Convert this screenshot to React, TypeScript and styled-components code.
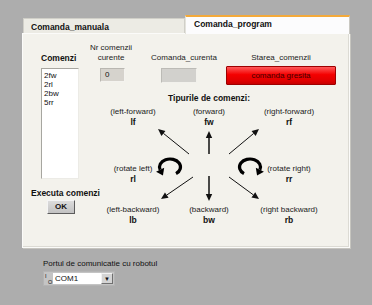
import React, { FC } from "react"
import styled, { createGlobalStyle } from "styled-components"

const GlobalStyle = createGlobalStyle`
    html, body {
        margin: 0;
        padding: 0;
        background: #adadad;
    }
    body {
        width: 372px;
        height: 305px;
        overflow: hidden;
        font-family: "Liberation Sans", Arial, sans-serif;
        color: #111;
    }
`

const Page = styled.div`
    padding: 15px 0 0 22px;
`

const TabStrip = styled.div`
    display: flex;
    align-items: flex-end;
    width: 328px;
    height: 18px;
`

const Tab = styled.div<{ $active?: boolean }>`
    box-sizing: border-box;
    font-size: 8.5px;
    font-weight: bold;
    white-space: nowrap;
    ${(p) =>
        p.$active
            ? `
        position: relative;
        z-index: 1;
        width: 165px;
        height: 19px;
        margin-bottom: -1px;
        padding: 2px 0 0 8px;
        background: #fcfcfd;
        border-top: 2px solid #f3a93a;
        border-left: 1px solid #e4e3dc;
        border-right: 1px solid #c9c8c2;
    `
            : `
        width: 162px;
        height: 15px;
        margin-left: 1px;
        padding: 3px 0 0 7px;
        background: #ecebe4;
        border: 1px solid #d0cfc8;
        border-bottom: none;
    `}
`

const Panel = styled.div`
    box-sizing: border-box;
    display: flex;
    width: 328px;
    height: 215px;
    padding: 9px 0 0 8px;
    background: #f3f2ec;
    border: 1px solid #fbfbf9;
    box-shadow: 1px 1px 0 #c6c5bf, inset -1px -1px 0 #dcdbd4;
`

const LeftColumn = styled.div`
    display: flex;
    flex-direction: column;
    align-items: flex-start;
    width: 60px;
    flex: none;
`

const BoldLabel = styled.div<{ $indent?: number; $top?: number }>`
    margin: ${(p) => p.$top ?? 0}px 0 0 ${(p) => p.$indent ?? 0}px;
    font-size: 8.5px;
    font-weight: bold;
    line-height: 9px;
    white-space: nowrap;
`

const ListBox = styled.div`
    box-sizing: border-box;
    width: 38px;
    height: 111px;
    margin: 5px 0 0 10px;
    padding: 2px 0 0 2px;
    background: #fff;
    border: 1px solid;
    border-color: #a7a6a0 #ecebe6 #ecebe6 #a7a6a0;
    font-size: 8px;
    line-height: 9px;
`

const OkButton = styled.div`
    box-sizing: border-box;
    width: 28px;
    height: 14px;
    margin: 2px 0 0 16px;
    background: linear-gradient(#dcdcdc, #c2c2c2);
    border: 1px solid;
    border-color: #f4f4f4 #5c5c5c #5c5c5c #f4f4f4;
    font-size: 8px;
    font-weight: bold;
    line-height: 12px;
    text-align: center;
`

const RightArea = styled.div`
    display: flex;
    flex-direction: column;
`

const TopRow = styled.div`
    display: flex;
`

const Field = styled.div<{ $width: number; $gap: number }>`
    display: flex;
    flex-direction: column;
    align-items: center;
    width: ${(p) => p.$width}px;
    margin-left: ${(p) => p.$gap}px;
`

const FieldLabel = styled.div`
    display: flex;
    align-items: flex-end;
    justify-content: center;
    height: 20px;
    font-size: 8px;
    line-height: 10px;
    text-align: center;
    white-space: nowrap;
    color: #222;
`

const FieldBody = styled.div`
    display: flex;
    align-items: center;
    justify-content: center;
    height: 24px;
`

const NumBox = styled.div`
    box-sizing: border-box;
    width: 25px;
    height: 14px;
    margin-left: 3px;
    padding-left: 4px;
    background: #d6d3cd;
    border: 1px solid;
    border-color: #b9b7b1 #f4f3ef #f4f3ef #b9b7b1;
    font-size: 8px;
    line-height: 12px;
`

const StringBox = styled.div`
    box-sizing: border-box;
    width: 36px;
    height: 15px;
    margin-left: -10px;
    background: #d2d1cd;
    border: 1px solid;
    border-color: #bcbbb6 #f2f1ec #f2f1ec #bcbbb6;
`

const StatusButton = styled.div`
    box-sizing: border-box;
    width: 110px;
    height: 19px;
    background: linear-gradient(#ff5a5a, #f40000 45%, #e00000 80%, #c80000);
    border: 1px solid #9e0000;
    border-radius: 1px;
    color: #420000;
    font-size: 8px;
    line-height: 17px;
    text-align: center;
`

const Title = styled.div`
    width: 236px;
    margin-top: 6px;
    font-size: 8.5px;
    font-weight: bold;
    line-height: 10px;
    text-align: center;
`

const Diagram = styled.div`
    display: grid;
    grid-template-columns: 80px 72px 88px;
    grid-template-rows: 20px 35px 22px 21px 20px;
    margin: 4px 0 0 2px;
`

const DiagramArt = styled.svg`
    grid-column: 1 / -1;
    grid-row: 1 / -1;
    width: 240px;
    height: 118px;
`

const Command = styled.div<{ $col: number; $row: number }>`
    grid-column: ${(p) => p.$col};
    grid-row: ${(p) => p.$row};
    align-self: ${(p) => (p.$row === 3 ? "end" : "start")};
    font-size: 8px;
    line-height: 10px;
    text-align: center;
    white-space: nowrap;
    color: #222;

    b {
        display: block;
        font-size: 8.5px;
        color: #111;
    }
`

const PortSection = styled.div`
    margin: 11px 0 0 21px;
`

const PortLabel = styled.div`
    font-size: 8px;
    line-height: 10px;
    color: #111;
`

const Combo = styled.div`
    box-sizing: border-box;
    display: flex;
    width: 72px;
    height: 15px;
    margin-top: 2px;
    padding: 1px;
    background: #c4c4c4;
    border: 1px solid #b4b4b4;
`

const IoGlyph = styled.div`
    width: 8px;
    font-size: 5.5px;
    line-height: 6px;

    span:last-child {
        display: block;
        padding-left: 3px;
    }
`

const ComboText = styled.div`
    flex: 1;
    padding-left: 2px;
    background: #fff;
    font-size: 8px;
    line-height: 11px;
`

const ComboButton = styled.div`
    box-sizing: border-box;
    width: 12px;
    background: #d4d4d4;
    border: 1px solid;
    border-color: #f2f2f2 #707070 #707070 #f2f2f2;
    font-size: 6px;
    line-height: 10px;
    text-align: center;
`

type Pt = [number, number]

const Arrow: FC<{ from: Pt; to: Pt; width?: number }> = ({ from, to, width = 1 }) => {
    const dx = to[0] - from[0]
    const dy = to[1] - from[1]
    const len = Math.hypot(dx, dy)
    const ux = dx / len
    const uy = dy / len
    const bx = to[0] - ux * 7
    const by = to[1] - uy * 7
    const head = [to, [bx - uy * 3.2, by + ux * 3.2], [bx + uy * 3.2, by - ux * 3.2]]
    return (
        <g>
            <line x1={from[0]} y1={from[1]} x2={bx} y2={by} stroke="#111" strokeWidth={width} />
            <polygon points={head.map((p) => p.join(",")).join(" ")} fill="#111" />
        </g>
    )
}

// rotate icon: thick elliptic arc with a head at its end
const Rotate: FC<{ cx: number; cy: number; start: number; end: number; cw: boolean }> = ({ cx, cy, start, end, cw }) => {
    const rx = 10.5
    const ry = 8
    const rad = (d: number) => (d * Math.PI) / 180
    const at = (d: number): Pt => [cx + rx * Math.cos(rad(d)), cy + ry * Math.sin(rad(d))]
    const s = at(start)
    const e = at(end)
    const sign = cw ? 1 : -1
    let tx = -rx * Math.sin(rad(end)) * sign
    let ty = ry * Math.cos(rad(end)) * sign
    const l = Math.hypot(tx, ty)
    tx /= l
    ty /= l
    const tip: Pt = [e[0] + tx * 6.5, e[1] + ty * 6.5]
    const a: Pt = [e[0] - ty * 4.5, e[1] + tx * 4.5]
    const b: Pt = [e[0] + ty * 4.5, e[1] - tx * 4.5]
    return (
        <g>
            <path
                d={`M ${s[0]} ${s[1]} A ${rx} ${ry} 0 1 ${cw ? 1 : 0} ${e[0]} ${e[1]}`}
                fill="none"
                stroke="#000"
                strokeWidth={3.2}
            />
            <polygon points={[tip, a, b].map((p) => p.join(",")).join(" ")} fill="#000" />
        </g>
    )
}

const commands = [
    { col: 1, row: 1, name: "(left-forward)", code: "lf" },
    { col: 2, row: 1, name: "(forward)", code: "fw" },
    { col: 3, row: 1, name: "(right-forward)", code: "rf" },
    { col: 1, row: 3, name: "(rotate left)", code: "rl" },
    { col: 3, row: 3, name: "(rotate right)", code: "rr" },
    { col: 1, row: 5, name: "(left-backward)", code: "lb" },
    { col: 2, row: 5, name: "(backward)", code: "bw" },
    { col: 3, row: 5, name: "(right backward)", code: "rb" },
]

const program = ["2fw", "2rl", "2bw", "5rr"]

export default function App() {
    return (
        <Page>
            <GlobalStyle />
            <TabStrip>
                <Tab>Comanda_manuala</Tab>
                <Tab $active>Comanda_program</Tab>
            </TabStrip>
            <Panel>
                <LeftColumn>
                    <BoldLabel $indent={10} $top={11}>Comenzi</BoldLabel>
                    <ListBox>
                        {program.map((c) => (
                            <div key={c}>{c}</div>
                        ))}
                    </ListBox>
                    <BoldLabel $top={10}>Executa comenzi</BoldLabel>
                    <OkButton>OK</OkButton>
                </LeftColumn>
                <RightArea>
                    <TopRow>
                        <Field $width={40} $gap={0}>
                            <FieldLabel>
                                Nr comenzii
                                <br />
                                curente
                            </FieldLabel>
                            <FieldBody>
                                <NumBox>0</NumBox>
                            </FieldBody>
                        </Field>
                        <Field $width={50} $gap={28}>
                            <FieldLabel>Comanda_curenta</FieldLabel>
                            <FieldBody>
                                <StringBox />
                            </FieldBody>
                        </Field>
                        <Field $width={110} $gap={17}>
                            <FieldLabel>Starea_comenzii</FieldLabel>
                            <FieldBody>
                                <StatusButton>comanda gresita</StatusButton>
                            </FieldBody>
                        </Field>
                    </TopRow>
                    <Title>Tipurile de comenzi:</Title>
                    <Diagram>
                        <DiagramArt viewBox="0 0 240 118">
                            <Arrow from={[116, 47]} to={[116, 24]} width={1.5} />
                            <Arrow from={[96, 47]} to={[65, 22]} />
                            <Arrow from={[136, 47]} to={[166, 22]} />
                            <Arrow from={[116, 69]} to={[116, 94]} width={1.5} />
                            <Arrow from={[100, 70]} to={[68, 92]} />
                            <Arrow from={[136, 70]} to={[166, 92]} />
                            <Rotate cx={77} cy={60} start={55} end={160} cw={false} />
                            <Rotate cx={157} cy={60} start={125} end={20} cw={true} />
                        </DiagramArt>
                        {commands.map((c) => (
                            <Command key={c.code} $col={c.col} $row={c.row}>
                                {c.name}
                                <b>{c.code}</b>
                            </Command>
                        ))}
                    </Diagram>
                </RightArea>
            </Panel>
            <PortSection>
                <PortLabel>Portul de comunicatie cu robotul</PortLabel>
                <Combo>
                    <IoGlyph>
                        <span>I</span>
                        <span>O</span>
                    </IoGlyph>
                    <ComboText>COM1</ComboText>
                    <ComboButton>▼</ComboButton>
                </Combo>
            </PortSection>
        </Page>
    )
}
